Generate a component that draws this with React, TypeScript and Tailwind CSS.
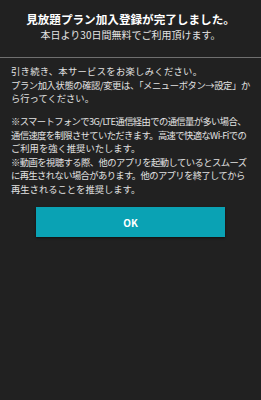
import React from 'react'

const font = { fontFamily: '"Noto Sans CJK JP", "Noto Sans", sans-serif' }

export default function App() {
  return (
    <div className="w-[261px] h-[400px] bg-[#212121] overflow-hidden" style={font}>
      {/* ヘッダー */}
      <div className="pt-[11px] pb-[15px] text-center">
        <h1 className="text-[11.6px] leading-[16px] font-bold text-white">
          見放題プラン加入登録が完了しました。
        </h1>
        <p className="mt-px text-[10px] leading-[14px] text-[#e4e4e4]">
          本日より30日間無料でご利用頂けます。
        </p>
      </div>

      <div className="h-px bg-[#6f6f6f]" />

      {/* 本文 */}
      <div className="pt-[7px] px-[11px] text-[9.3px] leading-[13.5px] text-[#e2e2e2] whitespace-nowrap">
        <div>
          <p className="tracking-[0.3px]">引き続き、本サービスをお楽しみください。</p>
          <p className="tracking-[-0.4px]">プラン加入状態の確認/変更は、「メニューボタン→設定」か</p>
          <p>ら行ってください。</p>
        </div>
        <div className="mt-[9.5px]">
          <p className="tracking-[-0.6px]">※スマートフォンで3G/LTE通信経由での通信量が多い場合、</p>
          <p className="tracking-[-0.6px]">通信速度を制限させていただきます。高速で快適なWi-Fiでの</p>
          <p>ご利用を強く推奨いたします。</p>
          <p className="tracking-[-0.55px]">※動画を視聴する際、他のアプリを起動しているとスムーズ</p>
          <p className="tracking-[-0.6px]">に再生されない場合があります。他のアプリを終了してから</p>
          <p>再生されることを推奨します。</p>
        </div>
      </div>

      <div className="mt-[11px] flex justify-center">
        <button className="w-[189px] h-[30px] bg-[#0aa2b4] text-white text-[10px] font-bold shadow-[0_1px_2px_rgba(0,0,0,0.5)]">
          OK
        </button>
      </div>
    </div>
  )
}
